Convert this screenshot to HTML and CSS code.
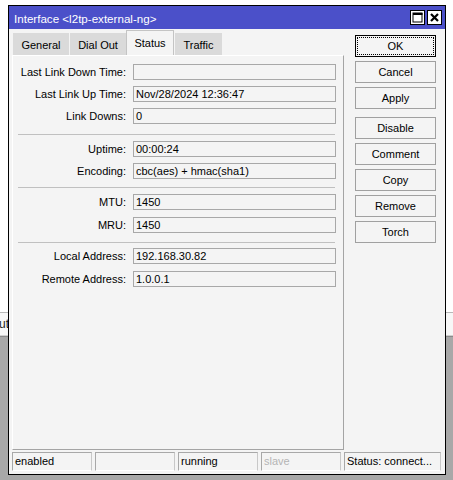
FILE: index.html
```html
<!DOCTYPE html>
<html>
<head>
<meta charset="utf-8">
<link rel="stylesheet" href="styles.css">
</head>
<body>
<div class="desk">
  <div class="desk-top"></div>
  <div class="band"><span class="band-text">ut</span></div>
  <div class="desk-bottom"></div>
</div>
<div class="window">
  <div class="titlebar">
    <span class="title">Interface &lt;l2tp-external-ng&gt;</span>
    <div class="tb-buttons">
      <span class="tb-btn">
        <svg width="13" height="13" viewBox="0 0 13 13"><rect x="2" y="2" width="9" height="9" fill="none" stroke="#000" stroke-width="1"/><rect x="2" y="2" width="9.5" height="2" fill="#000"/></svg>
      </span>
      <span class="tb-btn">
        <svg width="13" height="13" viewBox="0 0 13 13"><path d="M3 3 L10 10 M10 3 L3 10" stroke="#000" stroke-width="2.2" fill="none"/></svg>
      </span>
    </div>
  </div>
  <div class="main">
    <div class="left">
      <div class="tabs">
        <div class="tab tab-general">General</div>
        <div class="tab tab-dial">Dial Out</div>
        <div class="tab tab-status active">Status</div>
        <div class="tab tab-traffic">Traffic</div>
      </div>
      <div class="panel">
        <div class="group">
          <div class="label">Last Link Down Time:</div><div class="field"></div>
          <div class="label">Last Link Up Time:</div><div class="field">Nov/28/2024 12:36:47</div>
          <div class="label">Link Downs:</div><div class="field">0</div>
        </div>
        <div class="sep sep-1"></div>
        <div class="group">
          <div class="label">Uptime:</div><div class="field">00:00:24</div>
          <div class="label">Encoding:</div><div class="field">cbc(aes) + hmac(sha1)</div>
        </div>
        <div class="sep sep-2"></div>
        <div class="group group-wide">
          <div class="label">MTU:</div><div class="field">1450</div>
          <div class="label">MRU:</div><div class="field">1450</div>
        </div>
        <div class="sep sep-3"></div>
        <div class="group group-wide">
          <div class="label">Local Address:</div><div class="field">192.168.30.82</div>
          <div class="label">Remote Address:</div><div class="field">1.0.0.1</div>
        </div>
      </div>
    </div>
    <div class="buttons">
      <div class="btn btn-default"><span class="focus">OK</span></div>
      <div class="btn">Cancel</div>
      <div class="btn">Apply</div>
      <div class="btn btn-spaced">Disable</div>
      <div class="btn">Comment</div>
      <div class="btn">Copy</div>
      <div class="btn">Remove</div>
      <div class="btn">Torch</div>
    </div>
  </div>
  <div class="statusbar">
    <div class="cell">enabled</div>
    <div class="cell"></div>
    <div class="cell">running</div>
    <div class="cell dim">slave</div>
    <div class="cell wide">Status: connect...</div>
  </div>
</div>
</body>
</html>
```

FILE: styles.css
```css
html, body {
  margin: 0;
  padding: 0;
}
body {
  width: 453px;
  height: 480px;
  overflow: hidden;
  background: #ffffff;
  font-family: "Liberation Sans", Arial, sans-serif;
  font-size: 11px;
  color: #000;
  position: relative;
}
.desk {
  display: flex;
  flex-direction: column;
  height: 480px;
}
.desk-top {
  height: 312px;
  background: #ffffff;
}
.band {
  height: 22px;
  border-top: 1px solid #b8b8b8;
  border-bottom: 1px solid #d0d0d0;
  background: #f7f7f7;
  display: flex;
  align-items: center;
}
.band-text {
  font-size: 12px;
  color: #222;
  margin-left: -1px;
}
.desk-bottom {
  flex: 1;
  border-top: 1px solid #8a8a8a;
  background: #a8a8a8;
}
.window {
  position: absolute;
  left: 8px;
  top: 5px;
  width: 438px;
  height: 470px;
  box-sizing: border-box;
  border: 1px solid #000;
  background: #f4f4f4;
  display: flex;
  flex-direction: column;
}
.titlebar {
  height: 23px;
  background: #4b50c9;
  display: flex;
  align-items: center;
  justify-content: space-between;
  flex: none;
}
.title {
  color: #fff;
  font-size: 11.6px;
  margin-left: 5px;
  margin-top: 1px;
}
.tb-buttons {
  display: flex;
  gap: 2px;
  margin-right: 3px;
}
.tb-btn {
  width: 13px;
  height: 13px;
  border: 1px solid #000;
  background: #fff;
  display: block;
}
.tb-btn svg {
  display: block;
}
.main {
  height: 423px;
  display: flex;
  flex: none;
}
.left {
  margin-left: 3px;
  padding-top: 1px;
  display: flex;
  flex-direction: column;
}
.tabs {
  height: 25px;
  display: flex;
  align-items: flex-end;
  padding-left: 1px;
}
.tab {
  box-sizing: border-box;
  height: 22px;
  background: #dadada;
  display: flex;
  align-items: center;
  justify-content: center;
  padding-top: 1px;
}
.tab-general { width: 56px; margin-right: 1px; }
.tab-dial { width: 56px; }
.tab-status { width: 48px; }
.tab-traffic { width: 48px; border-left: 1px solid #f4f4f4; }
.tab.active {
  height: 25px;
  background: #f4f4f4;
  border: 1px solid #c4c4c4;
  border-bottom: none;
  padding-top: 0;
  padding-bottom: 1px;
}
.panel {
  box-sizing: border-box;
  width: 332px;
  height: 395px;
  border-top: 1px solid #ffffff;
  border-left: 1px solid #ffffff;
  border-right: 1px solid #a4a4a4;
  border-bottom: 1px solid #a4a4a4;
  padding-top: 8px;
  display: flex;
  flex-direction: column;
}
.group {
  display: grid;
  grid-template-columns: 113px 203px;
  column-gap: 7px;
  row-gap: 6px;
}
.group-wide {
  row-gap: 7px;
}
.label {
  text-align: right;
  height: 16px;
  line-height: 16px;
  white-space: nowrap;
}
.field {
  box-sizing: border-box;
  height: 16px;
  border: 1px solid #a8a8a8;
  background: #f4f4f4;
  padding-left: 2px;
  line-height: 14px;
  white-space: nowrap;
}
.sep {
  height: 1px;
  background: #c0c0c0;
  margin-left: 5px;
  width: 317px;
}
.sep-1 { margin-top: 10px; margin-bottom: 6px; }
.sep-2 { margin-top: 8px; margin-bottom: 6px; }
.sep-3 { margin-top: 9px; margin-bottom: 5px; }
.buttons {
  margin-left: 11px;
  padding-top: 6px;
  display: flex;
  flex-direction: column;
  gap: 4px;
}
.btn {
  box-sizing: border-box;
  width: 81px;
  height: 22px;
  border: 1px solid #a0a0a0;
  background: #f4f4f4;
  display: flex;
  align-items: center;
  justify-content: center;
}
.btn-default {
  border: 1px solid #000;
  padding: 1px;
}
.btn-default .focus {
  box-sizing: border-box;
  width: 100%;
  height: 100%;
  border: 1px dotted #000;
  display: flex;
  align-items: center;
  justify-content: center;
}
.btn-spaced {
  margin-top: 4px;
}
.statusbar {
  height: 19px;
  display: flex;
  gap: 3px;
  margin-left: 3px;
  flex: none;
}
.cell {
  box-sizing: border-box;
  width: 80px;
  height: 19px;
  border-top: 1px solid #a8a8a8;
  border-left: 1px solid #a8a8a8;
  border-right: 1px solid #c8c8c8;
  border-bottom: 1px solid #ffffff;
  padding-left: 2px;
  line-height: 17px;
  white-space: nowrap;
}
.cell.dim {
  color: #b4b4b4;
}
.cell.wide {
  width: 97px;
}
```
